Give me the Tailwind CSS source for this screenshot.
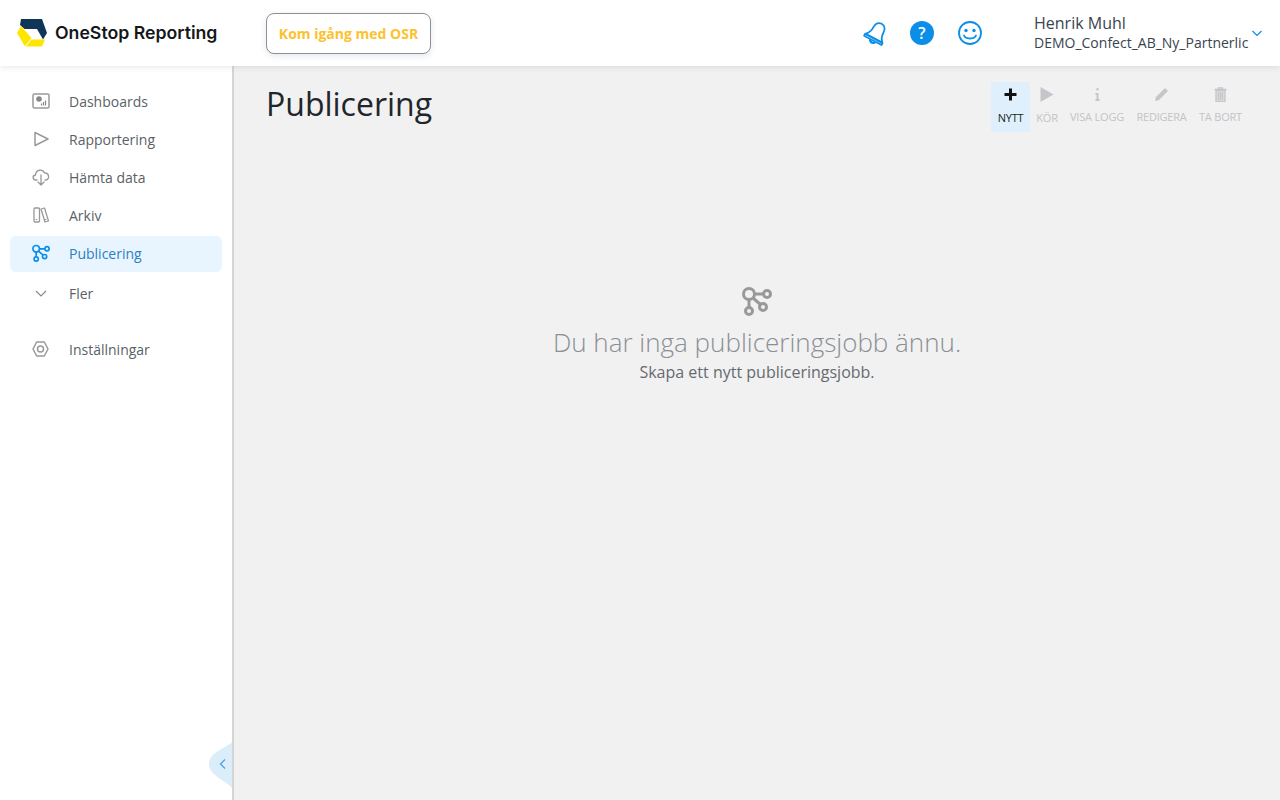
<!DOCTYPE html>
<html lang="sv">
<head>
    <meta charset="UTF-8">
    <title>Publicering</title>
    <script src="https://cdn.jsdelivr.net/npm/@tailwindcss/browser@4"></script>
</head>
<body class="h-screen overflow-hidden flex flex-col font-['Open_Sans',sans-serif] bg-[#f1f1f1]">
    <!-- Top bar -->
    <header class="relative z-10 h-[66px] shrink-0 bg-white flex items-center shadow-[0_1px_6px_rgba(40,60,90,0.12)]">
        <div class="w-[266px] shrink-0 flex items-center pl-[17px] gap-[8px]">
            <svg width="30" height="28" viewBox="0 0 30 28">
                <path d="M4 0H25L30 14L26 20.500L20 10H7.500L3 6Z" fill="#0f3557"/>
                <path d="M0 14L4 7L14.500 19L8 27.500Z" fill="#ffe600"/>
                <path d="M9 27.500H25L28 20.500H14.500Z" fill="#ffe600"/>
            </svg>
            <span class="font-['Inter',sans-serif] font-semibold text-[17.700px] text-[#14171a]">OneStop Reporting</span>
        </div>
        <button class="w-[165px] h-[41px] rounded-[8px] border border-[#8a8f99] bg-white text-[14px] font-bold text-[#fcc22e] shadow-[0_2px_6px_rgba(40,60,90,0.12)]">Kom igång med OSR</button>
        <div class="ml-auto flex items-center">
            <div class="flex items-center gap-[24px] text-[#0a8ee8]">
                <svg class="rotate-[28deg] translate-x-[1px]" width="25" height="25" viewBox="0 0 24 24" fill="none" stroke="currentColor" stroke-width="1.700" stroke-linejoin="round" stroke-linecap="round">
                    <path d="M12 1.500C8 1.500 6.500 4.500 6.500 8.500C6.500 13 5 15 3 17H21C19 15 17.500 13 17.500 8.500C17.500 4.500 16 1.500 12 1.500Z"/>
                    <path d="M2.500 17.500H21.500V19.500H2.500Z"/>
                    <path d="M9.500 20.500Q12 23 14.500 20.500" stroke-width="2.200"/>
                </svg>
                <div class="-ml-[2px] w-[24px] h-[24px] rounded-full bg-[#0a8ee8] flex items-center justify-center text-white text-[16px] font-semibold">?</div>
                <svg width="24" height="24" viewBox="0 0 24 24" fill="none" stroke="currentColor" stroke-width="1.800" stroke-linecap="round">
                    <circle cx="12" cy="12" r="11"/>
                    <circle cx="8" cy="9.500" r="1.700" fill="currentColor" stroke="none"/>
                    <circle cx="16" cy="9.500" r="1.700" fill="currentColor" stroke="none"/>
                    <path d="M6 14.500C7.500 18.500 16.500 18.500 18 14.500"/>
                </svg>
            </div>
            <div class="ml-[52px] w-[220px] text-[#3a4350]">
                <div class="text-[16px] leading-[20px]">Henrik Muhl</div>
                <div class="flex">
                    <span class="text-[14px] leading-[20px] whitespace-nowrap">DEMO_Confect_AB_Ny_Partnerlic</span>
                </div>
            </div>
            <svg class="mr-[18px] -ml-[2px]" width="10" height="7" viewBox="0 0 10 7" fill="none" stroke="#0a8ee8" stroke-width="1.200"><path d="M0.500 1L5 5.500L9.500 1"/></svg>
        </div>
    </header>

    <div class="flex-1 flex min-h-0">
        <!-- Sidebar -->
        <aside class="relative w-[234px] shrink-0 bg-white border-r-2 border-[#d6d6d6] pt-[18px] px-[10px] text-[14px] text-[#5b5f66]">
            <nav class="flex flex-col gap-[2px]">
                <a class="h-[36px] pb-[2px] flex items-center rounded-[6px]">
                    <span class="w-[59px] flex justify-center pl-[2px]">
                        <svg width="18" height="16" viewBox="0 0 18 16" fill="none" stroke="#999" stroke-width="1.500"><rect x="1" y="1" width="16" height="14" rx="1.500"/><circle cx="7" cy="6" r="2.800" fill="#888" stroke="none"/><path d="M9.500 12.500V10.500M11.500 12.500V9M13.500 12.500V7.500" stroke="#888" stroke-width="1.200"/></svg>
                    </span>
                    <span>Dashboards</span>
                </a>
                <a class="h-[36px] pb-[2px] flex items-center rounded-[6px]">
                    <span class="w-[59px] flex justify-center pl-[2px]">
                        <svg width="16" height="16" viewBox="0 0 16 16" fill="none" stroke="#999" stroke-width="1.500" stroke-linejoin="round"><path d="M2 1.500L15 8L2 14.500Z"/></svg>
                    </span>
                    <span>Rapportering</span>
                </a>
                <a class="h-[36px] pb-[2px] flex items-center rounded-[6px]">
                    <span class="w-[59px] flex justify-center pl-[2px]">
                        <svg width="18" height="18" viewBox="0 0 18 18" fill="none" stroke="#999" stroke-width="1.300" stroke-linecap="round" stroke-linejoin="round"><path d="M5 12H4C0.500 12 0 7.500 3.500 7C3.500 2 10.500 0 12.500 5C17 4.500 18.500 11.500 13.500 12H13"/><path d="M9 7V17M6 14L9 17L12 14"/></svg>
                    </span>
                    <span>Hämta data</span>
                </a>
                <a class="h-[36px] pb-[2px] flex items-center rounded-[6px]">
                    <span class="w-[59px] flex justify-center pl-[2px]">
                        <svg width="16" height="16" viewBox="0 0 16 16" fill="none" stroke="#999" stroke-width="1.300" stroke-linejoin="round"><rect x="1" y="1" width="5.500" height="14" rx="1"/><path d="M8 2L11.500 1L15.500 14L12 15Z"/><path d="M3.500 12V13M12.500 12L12.800 13" stroke-width="1.500"/></svg>
                    </span>
                    <span>Arkiv</span>
                </a>
                <a class="h-[36px] pb-[2px] flex items-center rounded-[6px] bg-[#e8f5fe] text-[#2b7fc4]">
                    <span class="w-[59px] flex justify-center pl-[2px]">
                        <svg width="18" height="18" viewBox="0 0 30 30" fill="none" stroke="#0a8ee8" stroke-width="2.800"><circle cx="7" cy="8" r="5.500"/><circle cx="25" cy="8" r="3.500"/><circle cx="7" cy="25" r="3.500"/><circle cx="21" cy="21" r="3.500"/><path d="M12.500 8H21.500M7 13.500V21.500M11 12L18.500 18.500"/></svg>
                    </span>
                    <span>Publicering</span>
                </a>
                <a class="mt-[2px] h-[36px] pb-[2px] flex items-center rounded-[6px]">
                    <span class="w-[59px] flex justify-center pl-[2px]">
                        <svg width="12" height="7" viewBox="0 0 12 7" fill="none" stroke="#888" stroke-width="1.200"><path d="M1 1L6 6L11 1"/></svg>
                    </span>
                    <span>Fler</span>
                </a>
                <a class="mt-[18px] h-[36px] pb-[2px] flex items-center rounded-[6px]">
                    <span class="w-[59px] flex justify-center pl-[2px]">
                        <svg width="17" height="16" viewBox="0 0 17 16" fill="none" stroke="#999" stroke-width="1.500" stroke-linejoin="round"><path d="M4.700 1H12.300L16 8L12.300 15H4.700L1 8Z"/><circle cx="8.500" cy="8" r="3"/></svg>
                    </span>
                    <span>Inställningar</span>
                </a>
            </nav>
            <!-- Collapse tab -->
            <button class="absolute right-0 bottom-0 w-[24px] h-[58px]">
                <svg class="absolute inset-0" width="24" height="58" viewBox="0 0 24 58"><path d="M24 0C20 5 1 10 1 22C1 34 20 40 24 46Z" fill="#dcedfa"/></svg>
                <svg class="absolute left-[11px] top-[17px]" width="7" height="10" viewBox="0 0 7 10" fill="none" stroke="#4aa3e8" stroke-width="1.300"><path d="M6 0.500L1.500 5L6 9.500"/></svg>
            </button>
        </aside>

        <!-- Content -->
        <main class="flex-1 min-w-0 flex flex-col">
            <div class="flex items-start pl-[32px] pr-[38px] pt-[16px]">
                <h1 class="text-[32px] leading-[44px] text-[#21262b]">Publicering</h1>
                <div class="ml-auto flex text-[11px] tracking-[-0.200px] text-[#c2c4c8] whitespace-nowrap">
                    <div class="w-[39px] h-[50px] bg-[#dff0fc] text-[#1c1f24] flex flex-col items-center pt-[3px]">
                        <svg class="mt-[3px] mb-[9px]" width="13" height="13" viewBox="0 0 13 13"><path d="M5 0.500H8V5H12.500V8H8V12.500H5V8H0.500V5H5Z" fill="#111"/></svg>
                        <span class="leading-[16px]">NYTT</span>
                    </div>
                    <div class="w-[34px] flex flex-col items-center pt-[3px]">
                        <svg class="mt-[1px] mb-[7px]" width="14" height="17" viewBox="0 0 14 17"><path d="M0.500 1V16L13.500 8.500Z" fill="#c4c6c9"/></svg>
                        <span class="leading-[16px]">KÖR</span>
                    </div>
                    <div class="ml-[6px] w-[54px] flex flex-col items-center pt-[3px]">
                        <svg class="mt-[2px] mb-[7px]" width="7" height="15" viewBox="0 0 7 15"><path d="M2.500 1H4.500V3.500H2.500ZM1.500 6H4.500V12H5.500V14H1.500V12H2.500V8H1.500Z" fill="#c4c6c9"/></svg>
                        <span class="leading-[16px]">VISA LOGG</span>
                    </div>
                    <div class="ml-[12px] w-[51px] flex flex-col items-center pt-[3px]">
                        <svg class="mt-[2px] mb-[7px]" width="15" height="15" viewBox="0 0 15 15"><path d="M11 1L14 4L5 13L1 14L2 10Z" fill="#c4c6c9"/></svg>
                        <span class="leading-[16px]">REDIGERA</span>
                    </div>
                    <div class="ml-[12px] w-[43px] flex flex-col items-center pt-[3px]">
                        <svg class="mt-[2px] mb-[7px]" width="13" height="15" viewBox="0 0 13 15" fill="none" stroke="#c4c6c9" stroke-width="1.300"><path d="M0.500 2.500H12.500M4.500 2.500V0.800H8.500V2.500"/><rect x="2" y="3.500" width="9" height="11" fill="#dcdde0"/><path d="M4.500 5V13M6.500 5V13M8.500 5V13"/></svg>
                        <span class="leading-[16px]">TA BORT</span>
                    </div>
                </div>
            </div>

            <!-- Empty state -->
            <div class="mt-[154px] flex flex-col items-center">
                <svg width="30" height="30" viewBox="0 0 30 30" fill="none" stroke="#999" stroke-width="3"><circle cx="7" cy="8" r="5.500"/><circle cx="25" cy="8" r="3.500"/><circle cx="7" cy="25" r="3.500"/><circle cx="21" cy="21" r="3.500"/><path d="M12.500 8H21.500M7 13.500V21.500M11 12L18.500 18.500"/></svg>
                <div class="mt-[8px] text-[26px] leading-[36px] font-light text-[#8b8f96]">Du har inga publiceringsjobb ännu.</div>
                <div class="mt-[1px] text-[16px] leading-[22px] text-[#666a70]">Skapa ett nytt publiceringsjobb.</div>
            </div>
        </main>
    </div>
</body>
</html>
